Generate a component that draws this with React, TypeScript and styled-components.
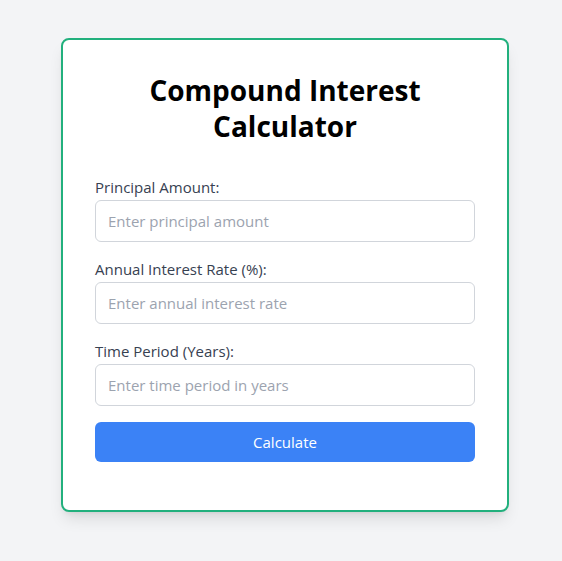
import styled, { createGlobalStyle } from 'styled-components';

const GlobalStyle = createGlobalStyle`
    * {
        box-sizing: border-box;
    }
    body {
        margin: 0;
        background: #f3f4f6;
        font-family: "Open Sans", "Noto Sans", sans-serif;
    }
`;

export default function App() {
    return (
        <>
            <GlobalStyle />
            <Page>
                <Card>
                    <Title>Compound Interest Calculator</Title>
                    <Form onSubmit={(e) => e.preventDefault()}>
                        <Field>
                            <Label htmlFor="principal">Principal Amount:</Label>
                            <Input id="principal" type="number" placeholder="Enter principal amount" />
                        </Field>
                        <Field>
                            <Label htmlFor="rate">Annual Interest Rate (%):</Label>
                            <Input id="rate" type="number" placeholder="Enter annual interest rate" />
                        </Field>
                        <Field>
                            <Label htmlFor="time">Time Period (Years):</Label>
                            <Input id="time" type="number" placeholder="Enter time period in years" />
                        </Field>
                        <SubmitButton type="submit">Calculate</SubmitButton>
                    </Form>
                </Card>
            </Page>
        </>
    );
}

const Page = styled.div`
    display: flex;
    justify-content: center;
    padding: 38px 0 40px 8px;
    min-height: 100vh;
`;

const Card = styled.div`
    width: 448px;
    background: #ffffff;
    border: 2px solid #22b07d;
    border-radius: 8px;
    padding: 32px 32px 48px;
    box-shadow: 0 10px 15px -3px rgba(0, 0, 0, 0.1), 0 4px 6px -4px rgba(0, 0, 0, 0.1);
    align-self: flex-start;
`;

const Title = styled.h1`
    margin: 0 0 32px;
    font-size: 28px;
    line-height: 36px;
    font-weight: 700;
    text-align: center;
    color: #000000;
`;

const Form = styled.form`
    display: flex;
    flex-direction: column;
`;

const Field = styled.div`
    display: flex;
    flex-direction: column;
    margin-bottom: 16px;
`;

const Label = styled.label`
    font-size: 15px;
    line-height: 22px;
    margin-bottom: 2px;
    color: #374151;
`;

const Input = styled.input`
    height: 42px;
    padding: 0 12px;
    font-family: inherit;
    font-size: 15px;
    color: #111827;
    border: 1px solid #d1d5db;
    border-radius: 6px;
    outline: none;
    -moz-appearance: textfield;

    &::placeholder {
        color: #9ca3af;
    }

    &::-webkit-outer-spin-button,
    &::-webkit-inner-spin-button {
        -webkit-appearance: none;
        margin: 0;
    }
`;

const SubmitButton = styled.button`
    height: 40px;
    border: none;
    border-radius: 6px;
    background: #3b82f6;
    color: #ffffff;
    font-family: inherit;
    font-size: 15px;
    cursor: pointer;
`;
